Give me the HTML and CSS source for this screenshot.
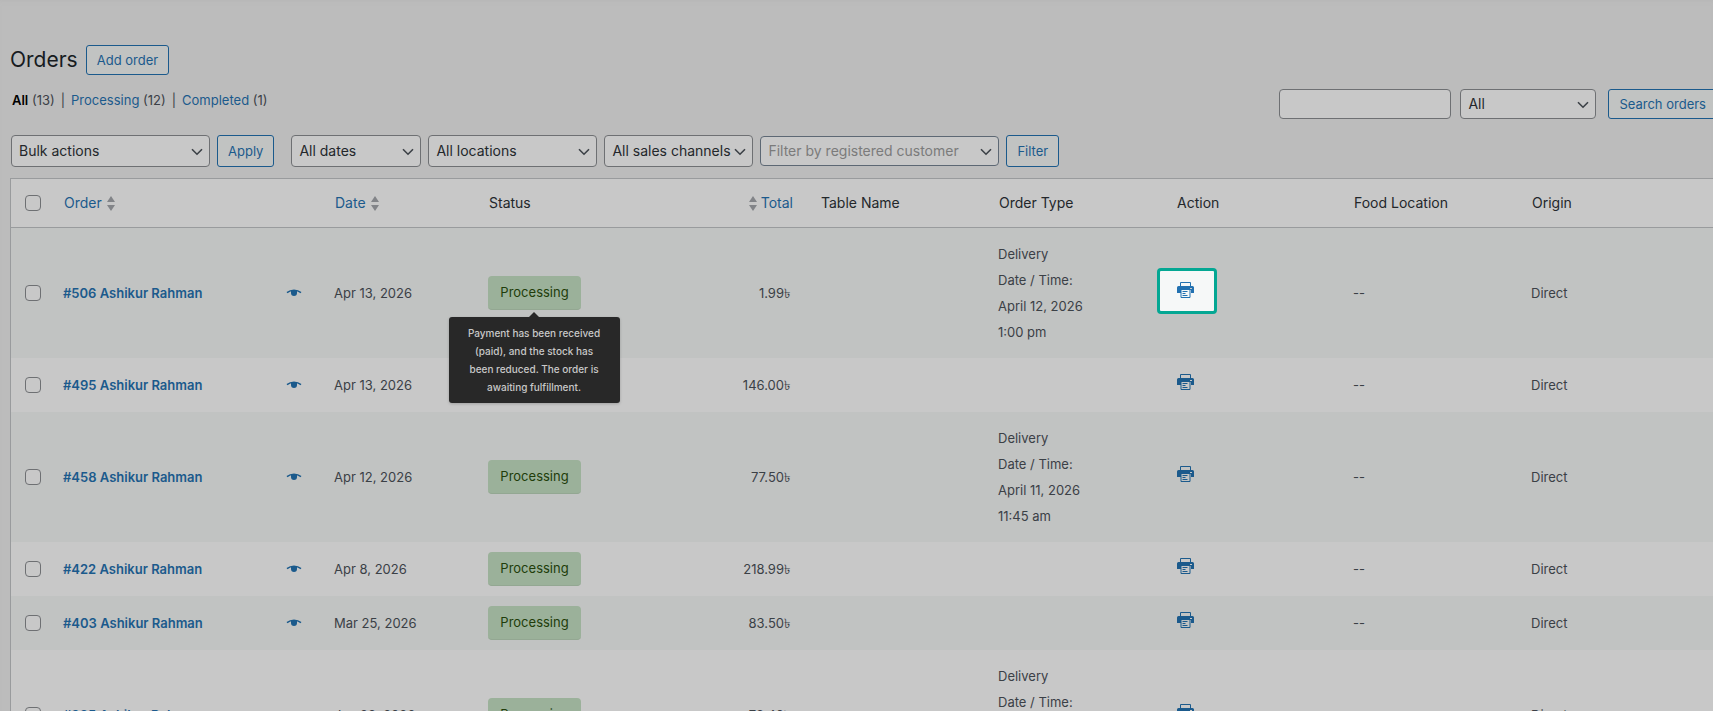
FILE: index.html
```
<!DOCTYPE html>
<html lang="en">
<head>
<meta charset="utf-8">
<title>Orders</title>
<link rel="stylesheet" href="styles.css">
</head>
<body>
<svg class="sprite" aria-hidden="true">
  <symbol id="chevron" viewBox="0 0 12 8"><path d="M1 1.2 6 6.2 11 1.2" fill="none" stroke="currentColor" stroke-width="1.6"/></symbol>
  <symbol id="sort" viewBox="0 0 8 15"><path d="M4 0 8 6H0zM4 15 0 9h8z" fill="currentColor"/></symbol>
  <symbol id="eye" viewBox="0 0 16 8"><path d="M1 3.6C5 .4 11 .4 15 3.6" fill="none" stroke="currentColor" stroke-width="1.5"/><path d="M5 1.400h6V4a3 3 0 0 1-6 0z" fill="currentColor"/></symbol>
  <symbol id="printer" viewBox="0 0 17 16"><path d="M3.500 4V.5h10V4" fill="none" stroke="currentColor"/><path d="M1.500 4h14A1.500 1.500 0 0 1 17 5.500V11h-3V8H4v3H0V5.500A1.500 1.500 0 0 1 1.500 4z" fill="currentColor"/><path d="M4 8v7.500h9V8M5.500 9.500h5M5.500 11.500h3M5.500 13.500h5" fill="none" stroke="currentColor"/><path d="M13 6.500h2" stroke="#c8c8c8"/></symbol>
</svg>
<main class="page">
  <header class="heading">
    <h1 class="title">Orders</h1>
    <button class="button" type="button">Add order</button>
  </header>
  <div class="subhead">
    <nav class="views" aria-label="Order status">
      <span><a class="current" href="#all">All</a> (13)</span><span>|</span>
      <span><a href="#processing">Processing</a> (12)</span><span>|</span>
      <span><a href="#completed">Completed</a> (1)</span>
    </nav>
    <form class="search">
      <input class="field search-text" type="text" aria-label="Search text">
      <span class="select search-scope"><select aria-label="Search in"><option>All</option></select><svg><use href="#chevron"/></svg></span>
      <button class="button search-button" type="button">Search orders</button>
    </form>
  </div>
  <div class="filters">
    <span class="select bulk"><select aria-label="Bulk actions"><option>Bulk actions</option></select><svg><use href="#chevron"/></svg></span>
    <button class="button apply" type="button">Apply</button>
    <span class="select dates"><select aria-label="Dates"><option>All dates</option></select><svg><use href="#chevron"/></svg></span>
    <span class="select locations"><select aria-label="Locations"><option>All locations</option></select><svg><use href="#chevron"/></svg></span>
    <span class="select channels"><select aria-label="Sales channels"><option>All sales channels</option></select><svg><use href="#chevron"/></svg></span>
    <span class="select customer"><select aria-label="Customer"><option>Filter by registered customer</option></select><svg><use href="#chevron"/></svg></span>
    <button class="button" type="button">Filter</button>
  </div>
  <table class="orders">
    <colgroup><col class="c-check"><col class="c-order"><col class="c-date"><col class="c-status"><col class="c-total"><col class="c-extra"><col class="c-extra"><col class="c-action"><col class="c-extra"><col></colgroup>
    <thead><tr>
      <th><input type="checkbox" aria-label="Select all"></th>
      <th><a class="sortable" href="#order">Order<svg><use href="#sort"/></svg></a></th>
      <th><a class="sortable" href="#date">Date<svg><use href="#sort"/></svg></a></th>
      <th>Status</th>
      <th class="total"><a class="sortable" href="#total"><svg><use href="#sort"/></svg>Total</a></th>
      <th>Table Name</th><th>Order Type</th><th>Action</th><th>Food Location</th><th>Origin</th>
    </tr></thead>
    <tbody>
      <tr>
        <td><input type="checkbox" aria-label="Select order 506"></td>
        <td><div class="order"><a href="#506">#506 Ashikur Rahman</a><button class="preview" type="button" aria-label="Preview"><svg><use href="#eye"/></svg></button></div></td>
        <td>Apr 13, 2026</td>
        <td><span class="status">Processing<span class="tooltip" role="tooltip">Payment has been received (paid), and the stock has been reduced. The order is awaiting fulfillment.</span></span></td>
        <td class="total">1.99৳</td><td></td>
        <td>Delivery<br>Date / Time:<br>April 12, 2026<br>1:00 pm</td>
        <td><a class="print highlighted" href="#print-506" aria-label="Print"><svg><use href="#printer"/></svg></a></td>
        <td>--</td><td>Direct</td>
      </tr>
      <tr>
        <td><input type="checkbox" aria-label="Select order 495"></td>
        <td><div class="order"><a href="#495">#495 Ashikur Rahman</a><button class="preview" type="button" aria-label="Preview"><svg><use href="#eye"/></svg></button></div></td>
        <td>Apr 13, 2026</td>
        <td><span class="status">Processing</span></td>
        <td class="total">146.00৳</td><td></td><td></td>
        <td><a class="print" href="#print-495" aria-label="Print"><svg><use href="#printer"/></svg></a></td>
        <td>--</td><td>Direct</td>
      </tr>
      <tr>
        <td><input type="checkbox" aria-label="Select order 458"></td>
        <td><div class="order"><a href="#458">#458 Ashikur Rahman</a><button class="preview" type="button" aria-label="Preview"><svg><use href="#eye"/></svg></button></div></td>
        <td>Apr 12, 2026</td>
        <td><span class="status">Processing</span></td>
        <td class="total">77.50৳</td><td></td>
        <td>Delivery<br>Date / Time:<br>April 11, 2026<br>11:45 am</td>
        <td><a class="print" href="#print-458" aria-label="Print"><svg><use href="#printer"/></svg></a></td>
        <td>--</td><td>Direct</td>
      </tr>
      <tr>
        <td><input type="checkbox" aria-label="Select order 422"></td>
        <td><div class="order"><a href="#422">#422 Ashikur Rahman</a><button class="preview" type="button" aria-label="Preview"><svg><use href="#eye"/></svg></button></div></td>
        <td>Apr 8, 2026</td>
        <td><span class="status">Processing</span></td>
        <td class="total">218.99৳</td><td></td><td></td>
        <td><a class="print" href="#print-422" aria-label="Print"><svg><use href="#printer"/></svg></a></td>
        <td>--</td><td>Direct</td>
      </tr>
      <tr>
        <td><input type="checkbox" aria-label="Select order 403"></td>
        <td><div class="order"><a href="#403">#403 Ashikur Rahman</a><button class="preview" type="button" aria-label="Preview"><svg><use href="#eye"/></svg></button></div></td>
        <td>Mar 25, 2026</td>
        <td><span class="status">Processing</span></td>
        <td class="total">83.50৳</td><td></td><td></td>
        <td><a class="print" href="#print-403" aria-label="Print"><svg><use href="#printer"/></svg></a></td>
        <td>--</td><td>Direct</td>
      </tr>
      <tr>
        <td><input type="checkbox" aria-label="Select order 385"></td>
        <td><div class="order"><a href="#385">#385 Ashikur Rahman</a><button class="preview" type="button" aria-label="Preview"><svg><use href="#eye"/></svg></button></div></td>
        <td>Jan 28, 2026</td>
        <td><span class="status">Processing</span></td>
        <td class="total">78.40৳</td><td></td>
        <td>Delivery<br>Date / Time:<br>January 28, 2026<br>1:00 pm</td>
        <td><a class="print" href="#print-385" aria-label="Print"><svg><use href="#printer"/></svg></a></td>
        <td>--</td><td>Direct</td>
      </tr>
    </tbody>
  </table>
</main>
</body>
</html>
```
FILE: styles.css
```
* { box-sizing: border-box; }
html { height: 100%; overflow: hidden; }
body {
  margin: 0;
  height: 100%;
  overflow: hidden;
  background: #bcbcbc;
  color: #3b4046;
  font: 14px/26px Inter, "Noto Sans", sans-serif;
  box-shadow: inset 0 4px 4px -3px #b6b6b6;
}
a { color: #1b5a8c; text-decoration: none; }
.sprite { position: absolute; width: 0; height: 0; }
.page { padding: 45px 0 0 10px; }
.heading { display: flex; align-items: center; gap: 8px; height: 30px; }
.title { margin: 0; color: #171b1f; font-size: 21px; font-weight: 400; line-height: 30px; }
.button {
  height: 30px;
  padding: 0 10px;
  border: 1px solid #1b5a8c;
  border-radius: 3px;
  background: #c1c3c2;
  color: #1b5a8c;
  font: 13px/26px Inter, sans-serif;
  white-space: nowrap;
}
.subhead { display: flex; justify-content: space-between; align-items: flex-start; height: 44px; margin-top: 14px; }
.views { display: flex; gap: 6px; padding: 0 2px; line-height: 22px; font-size: 13px; }
.current { color: #000; font-weight: 600; }
.search { display: flex; gap: 9px; margin-right: -4px; }
.field, .select select {
  width: 100%;
  height: 30px;
  border: 1px solid #6e7073;
  border-radius: 4px;
  background: #c8c8c8;
}
.search .search-text { width: 172px; }
.search-scope { width: 136px; }
.search-button { margin-left: 3px; }
.select { position: relative; display: block; flex: none; }
.select select {
  appearance: none;
  padding: 0 18px 0 7px;
  color: #23272b;
  font: 14px/26px Inter, sans-serif;
}
.select svg { position: absolute; right: 7px; top: 50%; width: 12px; height: 8px; margin-top: -3px; color: #3b4046; pointer-events: none; }
.filters { display: flex; align-items: center; gap: 7px; height: 32px; margin: 2px 0 11px 1px; }
.filters .button, .filters select { height: 32px; }
.bulk { width: 199px; }
.apply { margin-right: 10px; }
.dates { width: 130px; }
.locations { width: 169px; }
.channels { width: 149px; }
.customer { width: 239px; }
.filters .customer select { height: 30px; border-color: #5d6874; color: #7b7b7b; }
.orders {
  width: 100%;
  table-layout: fixed;
  border-collapse: separate;
  border-spacing: 0;
  border: 1px solid #999b9d;
  border-right: 0;
  background: #c8c8c8;
}
.c-check { width: 43px; }
.c-order { width: 271px; }
.c-date { width: 154px; }
.c-status { width: 155px; }
.c-total { width: 177px; }
.c-extra { width: 178px; }
.c-action { width: 177px; }
th { height: 49px; padding: 0 10px; border-bottom: 1px solid #999b9d; color: #23272b; font-weight: 400; text-align: left; }
td { height: 54px; padding: 13px 9px; font-size: 13px; }
tbody tr:nth-child(odd) { background: #c1c3c2; }
th:first-child, td:first-child { padding: 0 0 0 14px; }
.sortable { display: flex; align-items: center; gap: 5px; }
.sortable svg { width: 8px; height: 15px; color: #828488; }
.total { padding-right: 21px; text-align: right; }
th.total { padding-right: 18px; }
.total .sortable { justify-content: flex-end; gap: 4px; }
input[type="checkbox"] {
  appearance: none;
  display: block;
  width: 16px;
  height: 16px;
  margin: 0;
  border: 1px solid #6e7073;
  border-radius: 4px;
  background: #c8c8c8;
}
.order { display: flex; align-items: center; justify-content: space-between; padding-right: 14px; font-weight: 600; }
.preview { display: flex; padding: 0; border: 0; background: none; color: #1b5a8c; }
.preview svg { width: 16px; height: 8px; }
.status {
  position: relative;
  display: block;
  width: 93px;
  margin: -3px 0;
  border-bottom: 1px solid #93a792;
  border-radius: 4px;
  background: #9bb19a;
  color: #213d0a;
  line-height: 33px;
  text-align: center;
}
.tooltip {
  position: absolute;
  z-index: 1;
  top: 41px;
  left: 50%;
  width: 171px;
  margin-left: -86px;
  padding: 7px 14px;
  border-radius: 3px;
  background: #282828;
  box-shadow: 0 1px 3px #0003;
  color: #c8c8c8;
  font-size: 10px;
  font-weight: 500;
  line-height: 18px;
}
.tooltip::before { content: ""; position: absolute; top: -5px; left: 50%; margin-left: -5px; border: solid transparent; border-width: 0 5px 5px; border-bottom-color: #282828; }
.print { display: flex; width: 17px; margin: 0 0 6px 1px; color: #1b5a8c; }
.print svg { flex: none; width: 17px; height: 16px; }
.highlighted { width: 60px; height: 46px; margin: 0 0 4px -19px; padding: 11px 17px; border: 3px solid #04a793; border-radius: 4px; background: #f6f8f8; color: #2271b1; }
.status:has(.tooltip) { z-index: 1; }
```
